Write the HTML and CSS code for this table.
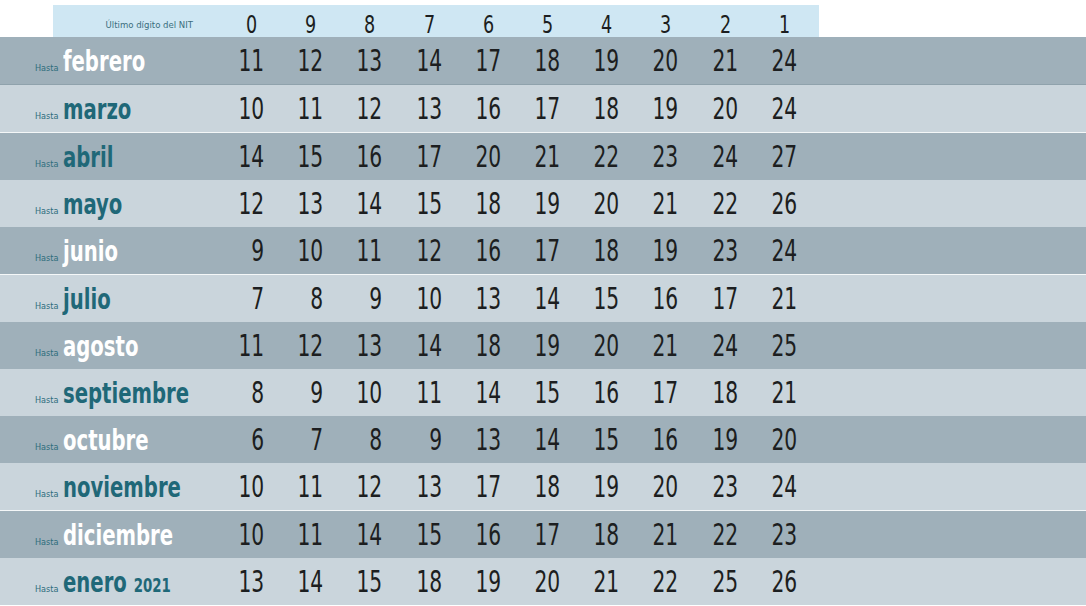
FILE: index.html
```html
<!DOCTYPE html>
<html lang="es">
<head>
<meta charset="utf-8">
<title>Calendario NIT</title>
<link rel="stylesheet" href="styles.css">
</head>
<body>
<div class="table">
  <div class="head">
    <div class="head-label">Último dígito del NIT</div>
    <div class="hd">0</div><div class="hd">9</div><div class="hd">8</div><div class="hd">7</div><div class="hd">6</div>
    <div class="hd">5</div><div class="hd">4</div><div class="hd">3</div><div class="hd">2</div><div class="hd">1</div>
  </div>

  <div class="row dark sep-dark">
    <div class="label"><span class="hasta">Hasta</span> <span class="month white">febrero</span></div>
    <div class="n">11</div><div class="n">12</div><div class="n">13</div><div class="n">14</div><div class="n">17</div><div class="n">18</div><div class="n">19</div><div class="n">20</div><div class="n">21</div><div class="n">24</div>
  </div>
  <div class="row light">
    <div class="label"><span class="hasta">Hasta</span> <span class="month">marzo</span></div>
    <div class="n">10</div><div class="n">11</div><div class="n">12</div><div class="n">13</div><div class="n">16</div><div class="n">17</div><div class="n">18</div><div class="n">19</div><div class="n">20</div><div class="n">24</div>
  </div>
  <div class="row dark sep-white">
    <div class="label"><span class="hasta">Hasta</span> <span class="month">abril</span></div>
    <div class="n">14</div><div class="n">15</div><div class="n">16</div><div class="n">17</div><div class="n">20</div><div class="n">21</div><div class="n">22</div><div class="n">23</div><div class="n">24</div><div class="n">27</div>
  </div>
  <div class="row light">
    <div class="label"><span class="hasta">Hasta</span> <span class="month">mayo</span></div>
    <div class="n">12</div><div class="n">13</div><div class="n">14</div><div class="n">15</div><div class="n">18</div><div class="n">19</div><div class="n">20</div><div class="n">21</div><div class="n">22</div><div class="n">26</div>
  </div>
  <div class="row dark">
    <div class="label"><span class="hasta">Hasta</span> <span class="month white">junio</span></div>
    <div class="n">9</div><div class="n">10</div><div class="n">11</div><div class="n">12</div><div class="n">16</div><div class="n">17</div><div class="n">18</div><div class="n">19</div><div class="n">23</div><div class="n">24</div>
  </div>
  <div class="row light sep-white">
    <div class="label"><span class="hasta">Hasta</span> <span class="month">julio</span></div>
    <div class="n">7</div><div class="n">8</div><div class="n">9</div><div class="n">10</div><div class="n">13</div><div class="n">14</div><div class="n">15</div><div class="n">16</div><div class="n">17</div><div class="n">21</div>
  </div>
  <div class="row dark">
    <div class="label"><span class="hasta">Hasta</span> <span class="month white">agosto</span></div>
    <div class="n">11</div><div class="n">12</div><div class="n">13</div><div class="n">14</div><div class="n">18</div><div class="n">19</div><div class="n">20</div><div class="n">21</div><div class="n">24</div><div class="n">25</div>
  </div>
  <div class="row light">
    <div class="label"><span class="hasta">Hasta</span> <span class="month">septiembre</span></div>
    <div class="n">8</div><div class="n">9</div><div class="n">10</div><div class="n">11</div><div class="n">14</div><div class="n">15</div><div class="n">16</div><div class="n">17</div><div class="n">18</div><div class="n">21</div>
  </div>
  <div class="row dark">
    <div class="label"><span class="hasta">Hasta</span> <span class="month white">octubre</span></div>
    <div class="n">6</div><div class="n">7</div><div class="n">8</div><div class="n">9</div><div class="n">13</div><div class="n">14</div><div class="n">15</div><div class="n">16</div><div class="n">19</div><div class="n">20</div>
  </div>
  <div class="row light">
    <div class="label"><span class="hasta">Hasta</span> <span class="month">noviembre</span></div>
    <div class="n">10</div><div class="n">11</div><div class="n">12</div><div class="n">13</div><div class="n">17</div><div class="n">18</div><div class="n">19</div><div class="n">20</div><div class="n">23</div><div class="n">24</div>
  </div>
  <div class="row dark sep-white">
    <div class="label"><span class="hasta">Hasta</span> <span class="month white">diciembre</span></div>
    <div class="n">10</div><div class="n">11</div><div class="n">14</div><div class="n">15</div><div class="n">16</div><div class="n">17</div><div class="n">18</div><div class="n">21</div><div class="n">22</div><div class="n">23</div>
  </div>
  <div class="row light">
    <div class="label"><span class="hasta">Hasta</span> <span class="month">enero <span class="year">2021</span></span></div>
    <div class="n">13</div><div class="n">14</div><div class="n">15</div><div class="n">18</div><div class="n">19</div><div class="n">20</div><div class="n">21</div><div class="n">22</div><div class="n">25</div><div class="n">26</div>
  </div>
</div>
</body>
</html>
```

FILE: styles.css
```css
html, body {
  margin: 0;
  padding: 0;
  background: #ffffff;
}

body {
  font-family: "DejaVu Sans", sans-serif;
  font-stretch: condensed;
  color: #1c1e20;
}

.table {
  padding-top: 5px;
  width: 1086px;
}

.head {
  margin-left: 53px;
  width: 766px;
  height: 32px;
  background: #cfe7f3;
  display: grid;
  grid-template-columns: 152px repeat(10, 59.2px);
  align-items: end;
}

.head-label {
  font-size: 9.5px;
  color: #3b6f7e;
  text-align: right;
  padding-right: 12px;
  line-height: 12px;
  padding-bottom: 6px;
}

.hd {
  font-size: 25px;
  line-height: 30px;
  margin-left: 34px;
  margin-bottom: -3px;
  width: 25px;
  text-align: center;
  transform: scaleX(0.78);
}

.row {
  display: grid;
  grid-template-columns: 205px repeat(10, 59.2px);
  height: 47px;
  align-items: center;
}

.row.dark { background: #9fb0ba; }
.row.light { background: #cad5dc; }

.sep-dark { border-bottom: 1px solid #8fa2ac; }
.sep-white { border-top: 1px solid #f4f7f8; }

.label {
  padding-left: 35px;
  white-space: nowrap;
  margin-top: 1px;
}

.hasta {
  font-size: 9px;
  color: #2e6d7c;
}

.month {
  display: inline-block;
  font-size: 28px;
  font-weight: bold;
  color: #1f6878;
  transform: scaleX(0.78);
  transform-origin: left center;
}

.month.white { color: #ffffff; }

.year {
  font-size: 19px;
}

.n {
  font-size: 30px;
  text-align: right;
  line-height: 47px;
  margin-top: 0;
  transform: scaleX(0.75);
  transform-origin: right center;
}
```
